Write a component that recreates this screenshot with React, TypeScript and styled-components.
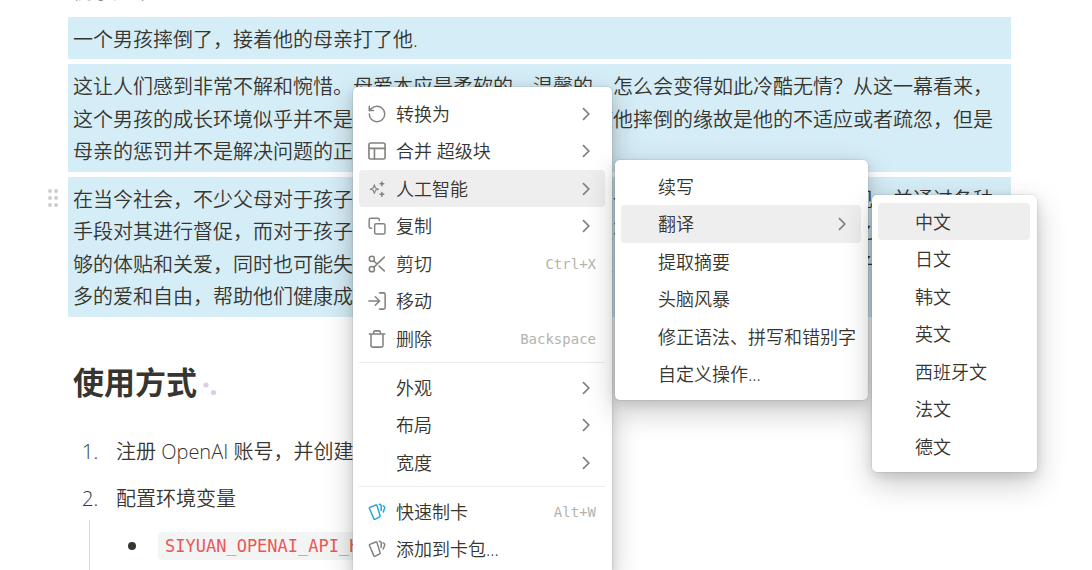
import React from 'react';
import styled, { createGlobalStyle } from 'styled-components';

const sans = `"Open Sans", "Noto Sans CJK SC", sans-serif`;
const mono = `"DejaVu Sans Mono", "Noto Sans CJK SC", monospace`;

const GlobalStyle = createGlobalStyle`
  *, *::before, *::after { box-sizing: border-box; }
  body {
    margin: 0;
    background: #fff;
    color: #37352f;
    font-family: ${sans};
    font-size: 20px;
    font-weight: 350;
    text-spacing-trim: space-all;
  }
`;

const Page = styled.div`
  position: relative;
  height: 100vh;
  overflow: hidden;
`;

const Doc = styled.main`
  display: flex;
  flex-direction: column;
  gap: 5px;
  margin-top: -31px;
  padding: 0 81px 0 68px;
`;

const Block = styled.p<{ $selected?: boolean }>`
  margin: 0;
  padding: 7px 5px 3px;
  line-height: 1.625;
  background: ${(p) => (p.$selected ? '#d5edf7' : 'transparent')};
`;

const BlockRow = styled.div`
  position: relative;
`;

const Handle = styled.button`
  position: absolute;
  top: 12px;
  left: -21px;
  display: flex;
  padding: 0;
  border: 0;
  background: none;
  color: #cfcecb;
`;

const Heading = styled.h2`
  display: flex;
  align-items: center;
  margin: 35px 0 0;
  padding: 5px;
  font-size: 31px;
  font-weight: 700;
  line-height: 40px;
`;

const Marks = styled.svg`
  margin: 15px 0 0 6px;
`;

const List = styled.ol`
  display: flex;
  flex-direction: column;
  gap: 15px;
  margin: 24px 0 0;
  padding: 0;
  list-style: none;
`;

const Item = styled.li`
  display: grid;
  grid-template-columns: 48px 1fr;
  line-height: 32px;
`;

const Marker = styled.span`
  padding-left: 14px;
`;

const Nested = styled.ul`
  grid-column: 1 / -1;
  margin: 5px 0 0 21px;
  padding: 12px 0 40px;
  border-left: 1px solid #dcdbd9;
  list-style: none;
`;

const NestedItem = styled.li`
  display: flex;
  align-items: center;
  gap: 22px;
  padding-left: 38px;
`;

const Dot = styled.span`
  width: 8px;
  height: 8px;
  border-radius: 50%;
  background: #37352f;
`;

const Code = styled.code`
  padding: 0 7px;
  border-radius: 4px;
  background: #f3f4f4;
  color: #eb5757;
  font-family: ${mono};
  font-size: 17px;
  font-weight: 400;
  line-height: 28px;
`;

const MenuBox = styled.div<{ $x: number; $y: number; $w: number }>`
  position: absolute;
  left: ${(p) => p.$x}px;
  top: ${(p) => p.$y}px;
  width: ${(p) => p.$w}px;
  padding: 8px 7px 7px 6px;
  border-radius: 5px;
  background: #fff;
  box-shadow:
    0 0 0 1px rgba(15, 15, 15, 0.06),
    0 4px 12px rgba(15, 15, 15, 0.12),
    0 11px 30px rgba(15, 15, 15, 0.22);
`;

const MenuRow = styled.button<{ $active?: boolean }>`
  display: flex;
  align-items: center;
  gap: 10px;
  width: 100%;
  height: 37px;
  padding: 0 9px;
  border: 0;
  border-radius: 4px;
  background: ${(p) => (p.$active ? '#eeeeee' : 'transparent')};
  color: #37352f;
  font: 350 18px/24px ${sans};
  text-align: left;
  white-space: nowrap;

  &:nth-child(even) {
    height: 38px;
  }
`;

const IconSlot = styled.span<{ $accent?: boolean }>`
  display: flex;
  flex: none;
  width: 18px;
  height: 18px;
  color: ${(p) => (p.$accent ? '#2aa5dc' : '#83827e')};
`;

const Label = styled.span`
  flex: 1;
`;

const Shortcut = styled.kbd`
  color: #b5b3ae;
  font-family: ${mono};
  font-size: 14px;
  font-weight: 400;
`;

const Arrow = styled.svg`
  flex: none;
  margin-right: 5px;
  color: #83827e;
`;

const Separator = styled.hr`
  height: 1px;
  margin: 5px 0 6px;
  border: 0;
  background: #ebebea;
`;

type IconName = 'rotate' | 'layout' | 'sparkles' | 'copy' | 'cut' | 'move' | 'trash' | 'cards';

const icons: Record<IconName, { box: string; width: number; art: React.ReactNode }> = {
  rotate: {
    box: '1.5 1.5 21 21',
    width: 1.7,
    art: (
      <>
        <path d="M3 12a9 9 0 1 0 9-9 9.75 9.75 0 0 0-6.74 2.74L3 8" />
        <path d="M3 3v5h5" />
      </>
    ),
  },
  layout: {
    box: '1.5 1.5 21 21',
    width: 1.9,
    art: (
      <>
        <rect x="2.6" y="2.6" width="18.8" height="18.8" rx="2" />
        <path d="M3 9h18M9 21V9" />
      </>
    ),
  },
  sparkles: {
    box: '0 0 24 24',
    width: 1.5,
    art: (
      <>
        <path d="M8.5 6.5 10 10.6l4 1.6-4 1.6-1.5 4.1L7 13.8l-4-1.6 4-1.6z" />
        <path d="M18.5 2.5v5M16 5h5M18.5 16.5v5M16 19h5" strokeWidth="2" />
      </>
    ),
  },
  copy: {
    box: '0.5 0.5 23 23',
    width: 1.9,
    art: (
      <>
        <rect x="9" y="9" width="13.2" height="13.2" rx="2" />
        <path d="M5 15H4a2 2 0 0 1-2-2V4a2 2 0 0 1 2-2h9a2 2 0 0 1 2 2v1" />
      </>
    ),
  },
  cut: {
    box: '1.5 1.5 21 21',
    width: 1.8,
    art: (
      <>
        <circle cx="6" cy="6" r="3" />
        <circle cx="6" cy="18" r="3" />
        <path d="M20.5 4 8.12 15.88M14.47 14.48 20.5 20M8.12 8.12 12 12" />
      </>
    ),
  },
  move: {
    box: '1.5 1.5 21 21',
    width: 1.8,
    art: (
      <>
        <path d="M15 2.5h4.5a2 2 0 0 1 2 2v15a2 2 0 0 1-2 2H15" />
        <path d="m10 17 5-5-5-5M15 12H2.5" />
      </>
    ),
  },
  trash: {
    box: '1.5 1.5 21 21',
    width: 1.8,
    art: (
      <path d="M3 6.2h18M19 6.2v13.3a2 2 0 0 1-2 2H7a2 2 0 0 1-2-2V6.2M8 6V4.5a2 2 0 0 1 2-2h4a2 2 0 0 1 2 2V6" />
    ),
  },
  cards: {
    box: '0 0 24 24',
    width: 2,
    art: (
      <>
        <path d="M2.4 5.8 10.6 2.6a1 1 0 0 1 1.3.6l4.3 14a1 1 0 0 1-.6 1.2l-6.4 3.4a1 1 0 0 1-1.3-.6L1.8 7.1a1 1 0 0 1 .6-1.3z" />
        <path d="M15.2 1.8c1.9.1 2.6 1 2.5 2.5L17.5 10M20.2 3.8c1.9.7 2.5 1.7 2 3.2L20.3 12" />
      </>
    ),
  },
};

function Icon({ name }: { name: IconName }) {
  const icon = icons[name];
  return (
    <svg
      width="18"
      height="18"
      viewBox={icon.box}
      fill="none"
      stroke="currentColor"
      strokeWidth={icon.width}
      strokeLinecap="round"
      strokeLinejoin="round"
      aria-hidden="true"
    >
      {icon.art}
    </svg>
  );
}

interface Entry {
  label: string;
  icon?: IconName;
  accent?: boolean;
  shortcut?: string;
  submenu?: boolean;
  active?: boolean;
}

const blockMenu: (Entry | null)[] = [
  { label: '转换为', icon: 'rotate', submenu: true },
  { label: '合并 超级块', icon: 'layout', submenu: true },
  { label: '人工智能', icon: 'sparkles', submenu: true, active: true },
  { label: '复制', icon: 'copy', submenu: true },
  { label: '剪切', icon: 'cut', shortcut: 'Ctrl+X' },
  { label: '移动', icon: 'move' },
  { label: '删除', icon: 'trash', shortcut: 'Backspace' },
  null,
  { label: '外观', submenu: true },
  { label: '布局', submenu: true },
  { label: '宽度', submenu: true },
  null,
  { label: '快速制卡', icon: 'cards', accent: true, shortcut: 'Alt+W' },
  { label: '添加到卡包...', icon: 'cards' },
];

const aiMenu: Entry[] = [
  { label: '续写' },
  { label: '翻译', submenu: true, active: true },
  { label: '提取摘要' },
  { label: '头脑风暴' },
  { label: '修正语法、拼写和错别字' },
  { label: '自定义操作...' },
];

const languageMenu: Entry[] = [
  { label: '中文', active: true },
  { label: '日文' },
  { label: '韩文' },
  { label: '英文' },
  { label: '西班牙文' },
  { label: '法文' },
  { label: '德文' },
];

function Menu({ x, y, w, name, entries }: { x: number; y: number; w: number; name: string; entries: (Entry | null)[] }) {
  return (
    <MenuBox $x={x} $y={y} $w={w} role="menu" aria-label={name}>
      {entries.map((entry, i) =>
        entry ? (
          <MenuRow key={i} type="button" role="menuitem" $active={entry.active}>
            <IconSlot $accent={entry.accent}>{entry.icon && <Icon name={entry.icon} />}</IconSlot>
            <Label>{entry.label}</Label>
            {entry.shortcut && <Shortcut>{entry.shortcut}</Shortcut>}
            {entry.submenu && (
              <Arrow width="10" height="14" viewBox="0 0 10 14" fill="none" stroke="currentColor" strokeWidth="1.7" aria-hidden="true">
                <path d="M2 1.2 7.8 7 2 12.8" />
              </Arrow>
            )}
          </MenuRow>
        ) : (
          <Separator key={i} />
        ),
      )}
    </MenuBox>
  );
}

export default function App() {
  return (
    <Page lang="zh-CN">
      <GlobalStyle />
      <Doc>
        <Block>例子如下：</Block>
        <Block $selected>一个男孩摔倒了，接着他的母亲打了他.</Block>
        <Block $selected>
          这让人们感到非常不解和惋惜。母爱本应是柔软的、温馨的，怎么会变得如此冷酷无情？从这一幕看来，这个男孩的成长环境似乎并不是那么温暖。也许有人认为，使他摔倒的缘故是他的不适应或者疏忽，但是母亲的惩罚并不是解决问题的正确方式。
        </Block>
        <BlockRow>
          <Handle type="button" aria-label="拖动">
            <svg width="12" height="18" viewBox="0 0 12 18" fill="currentColor" aria-hidden="true">
              <circle cx="3" cy="2" r="2" />
              <circle cx="9" cy="2" r="2" />
              <circle cx="3" cy="9" r="2" />
              <circle cx="9" cy="9" r="2" />
              <circle cx="3" cy="16" r="2" />
              <circle cx="9" cy="16" r="2" />
            </svg>
          </Handle>
          <Block $selected>
            在当今社会，不少父母对于孩子的学习成绩和未来的发展抱有一些过高的期望，关注其表现，并通过各种手段对其进行督促，而对于孩子的心理健康却往往忽视了，这不仅会让孩子感受不到父母之间的理解与足够的体贴和关爱，同时也可能失去自信与快乐。因此，父母应当学会理解和尊重自己的孩子，给予他们更多的爱和自由，帮助他们健康成长。
          </Block>
        </BlockRow>
        <Heading>
          使用方式
          <Marks width="14" height="14" viewBox="0 0 14 14" fill="#d9d0e8" aria-hidden="true">
            <circle cx="3" cy="3" r="2.6" />
            <circle cx="10.5" cy="10.5" r="2.6" />
          </Marks>
        </Heading>
        <List>
          <Item>
            <Marker>1.</Marker>
            <span>注册 OpenAI 账号，并创建</span>
          </Item>
          <Item>
            <Marker>2.</Marker>
            <span>配置环境变量</span>
            <Nested>
              <NestedItem>
                <Dot />
                <Code>SIYUAN_OPENAI_API_HOST</Code>
              </NestedItem>
            </Nested>
          </Item>
        </List>
      </Doc>
      <Menu x={353} y={87} w={259} name="块菜单" entries={blockMenu} />
      <Menu x={615} y={160} w={253} name="人工智能" entries={aiMenu} />
      <Menu x={872} y={195} w={165} name="翻译" entries={languageMenu} />
    </Page>
  );
}
